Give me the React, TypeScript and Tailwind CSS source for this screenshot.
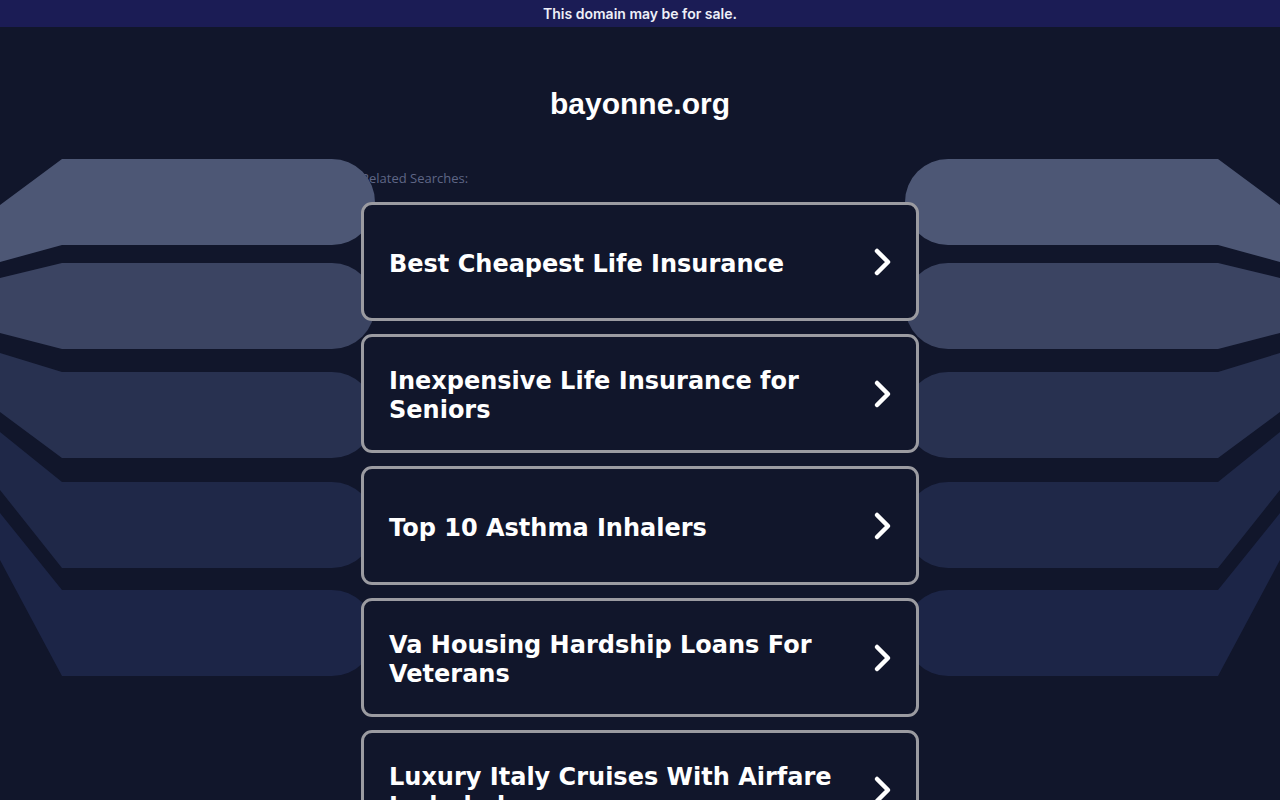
const bars = [
  { d: "M0 205 L62 159 L332 159 A43 43 0 0 1 332 245 L62 245 L0 262 Z", fill: "#4d5775" },
  { d: "M0 278 L62 263 L332 263 A43 43 0 0 1 332 349 L62 349 L0 333 Z", fill: "#3b4462" },
  { d: "M0 353 L62 372 L332 372 A43 43 0 0 1 332 458 L62 458 L0 412 Z", fill: "#283150" },
  { d: "M0 432 L62 482 L332 482 A43 43 0 0 1 332 568 L62 568 L0 490 Z", fill: "#1f2848" },
  { d: "M0 513 L62 590 L332 590 A43 43 0 0 1 332 676 L62 676 L0 560 Z", fill: "#1c2547" },
];

const links = [
  "Best Cheapest Life Insurance",
  "Inexpensive Life Insurance for Seniors",
  "Top 10 Asthma Inhalers",
  "Va Housing Hardship Loans For Veterans",
  "Luxury Italy Cruises With Airfare Included",
];

function Backdrop() {
  return (
    <svg
      className="pointer-events-none absolute left-0 top-0 z-10"
      width="1280"
      height="800"
      viewBox="0 0 1280 800"
    >
      {bars.map((b) => (
        <path key={b.d} d={b.d} fill={b.fill} />
      ))}
      <g transform="translate(1280 0) scale(-1 1)">
        {bars.map((b) => (
          <path key={b.d} d={b.d} fill={b.fill} />
        ))}
      </g>
    </svg>
  );
}

function Chevron() {
  return (
    <svg width="22" height="30" viewBox="0 0 22 30" fill="none">
      <path d="M5 4 L16 15 L5 26" stroke="white" strokeWidth="4.5" strokeLinecap="round" strokeLinejoin="round" />
    </svg>
  );
}

export default function App() {
  return (
    <div className="relative min-h-screen overflow-hidden bg-[#11162b]">
      <div className="flex h-[27px] items-center justify-center bg-[#1b1c55] font-['Inter',sans-serif] text-sm font-semibold text-[#eef0f8]">
        This domain may be for sale.
      </div>

      <Backdrop />

      <main className="mx-auto flex w-[558px] flex-col pb-10">
        <h1 className="mt-[59px] text-center font-['Liberation_Sans',Arial,sans-serif] text-[30px] font-bold leading-9 text-white">
          bayonne.org
        </h1>
        <p className="mt-[48px] font-['Open_Sans',sans-serif] text-[13px] leading-4 text-[#5f6686]">
          Related Searches:
        </p>
        <div className="relative z-20 mt-4 flex flex-col gap-[13px]">
          {links.map((text) => (
            <a
              key={text}
              href="#"
              className="flex min-h-[119px] items-center rounded-[11px] border-[3px] border-[#9b9ba1] bg-[#11162b] pl-[25px] pr-[22px]"
            >
              <span className="flex-1 pr-6 pt-[5px] font-['DejaVu_Sans',Verdana,sans-serif] text-[24px] font-bold leading-[29px] text-white">
                {text}
              </span>
              <Chevron />
            </a>
          ))}
        </div>
      </main>
    </div>
  );
}
